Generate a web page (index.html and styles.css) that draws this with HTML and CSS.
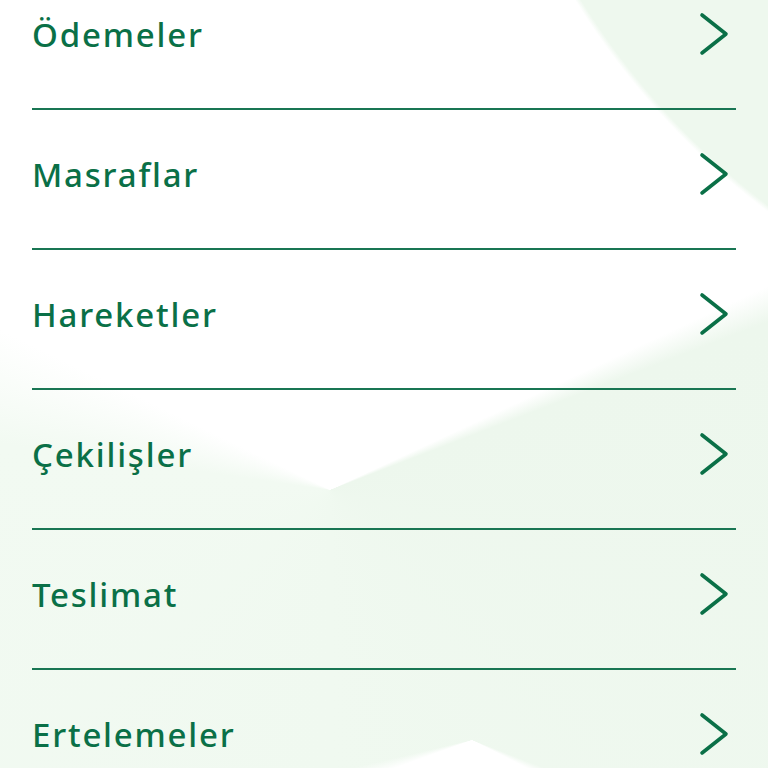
FILE: index.html
```html
<!DOCTYPE html>
<html lang="tr">
<head>
  <meta charset="UTF-8">
  <meta name="viewport" content="width=device-width, initial-scale=1.0">
  <title>Menü</title>
  <link rel="stylesheet" href="styles.css">
</head>
<body>
  <div class="page">
    <!-- menü listesi -->
    <ul class="menu">
      <li class="menu-item">
        <a href="#">
          <span class="menu-text">Ödemeler</span>
          <svg class="arrow" viewBox="0 0 30 44"><path d="M3 3 L27 22 L3 41"/></svg>
        </a>
      </li>
      <li class="menu-item">
        <a href="#">
          <span class="menu-text">Masraflar</span>
          <svg class="arrow" viewBox="0 0 30 44"><path d="M3 3 L27 22 L3 41"/></svg>
        </a>
      </li>
      <li class="menu-item">
        <a href="#">
          <span class="menu-text">Hareketler</span>
          <svg class="arrow" viewBox="0 0 30 44"><path d="M3 3 L27 22 L3 41"/></svg>
        </a>
      </li>
      <li class="menu-item">
        <a href="#">
          <span class="menu-text">Çekilişler</span>
          <svg class="arrow" viewBox="0 0 30 44"><path d="M3 3 L27 22 L3 41"/></svg>
        </a>
      </li>
      <li class="menu-item">
        <a href="#">
          <span class="menu-text">Teslimat</span>
          <svg class="arrow" viewBox="0 0 30 44"><path d="M3 3 L27 22 L3 41"/></svg>
        </a>
      </li>
      <li class="menu-item">
        <a href="#">
          <span class="menu-text">Ertelemeler</span>
          <svg class="arrow" viewBox="0 0 30 44"><path d="M3 3 L27 22 L3 41"/></svg>
        </a>
      </li>
    </ul>
  </div>
</body>
</html>
```

FILE: styles.css
```css
* {
    box-sizing: border-box;
}

html,
body {
    margin: 0;
    padding: 0;
    height: 100%;
    overflow: hidden;
}

/* 背景：右上弧形 + 下方浅绿斜面 */
body {
    background-color: #fff;
    background-image:
        radial-gradient(circle 765px at 1227px -400px, #eef8ee 0, #eef8ee 99.3%, rgba(238, 248, 238, 0) 100%),
        conic-gradient(from 0deg at 472px 740px, rgba(255, 255, 255, 0) 0 111deg, #fff 117deg 250deg, rgba(255, 255, 255, 0) 257deg),
        conic-gradient(from 0deg at 330px 490px, rgba(238, 248, 238, 0) 0 65deg, #edf7ed 69deg, #f0f9f0 180deg, #f2faf2 278deg, rgba(242, 250, 242, 0) 296deg);
    font-family: "Noto Sans", "Open Sans", sans-serif;
}

.page {
    padding: 0 32px;
}

/* 列表 */
.menu {
    list-style: none;
    margin: -30px 0 0;
    padding: 0;
}

.menu-item {
    border-bottom: 2px solid #197653;
}

.menu-item a {
    display: flex;
    align-items: center;
    justify-content: space-between;
    height: 138px;
    padding-bottom: 10px;
    text-decoration: none;
}

.menu-text {
    font-size: 33px;
    font-weight: 500;
    letter-spacing: 1.8px;
    color: #0a7047;
}

.arrow {
    width: 30px;
    height: 44px;
    margin-right: 7px;
    fill: none;
    stroke: #0a7047;
    stroke-width: 3.6;
    stroke-linecap: round;
    stroke-linejoin: round;
}
```
